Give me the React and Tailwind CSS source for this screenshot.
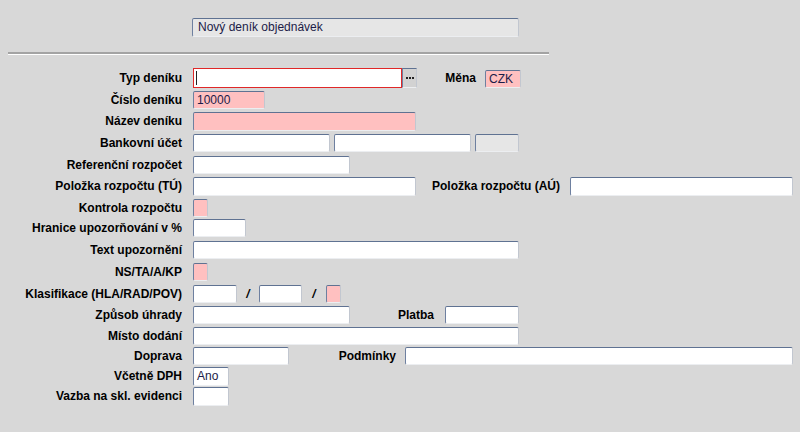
const font = { fontFamily: '"Liberation Sans", Arial, sans-serif' };

function Field({ w, h = 'h-[18px]', tone = 'white', className = '', children }) {
  const bg =
    tone === 'pink' ? 'bg-[#ffc0c0]' : tone === 'gray' ? 'bg-[#e6e6e6]' : 'bg-white';
  return (
    <div
      className={`${w} ${h} ${bg} ${className} shrink-0 rounded-[2px] border border-t-[#5f7292] border-l-[#6e80a0] border-r-[#c2c7d0] border-b-[#eceef1] px-[3px] text-[12px] leading-[16px] text-[#1c1c48] overflow-hidden whitespace-nowrap`}
    >
      {children}
    </div>
  );
}

function Label({ children, w = 'w-[182px]', lh = 'leading-[18px]' }) {
  return (
    <div className={`${w} ${lh} shrink-0 text-right text-[12px] font-bold text-black whitespace-nowrap`}>
      {children}
    </div>
  );
}

function Row({ h, children, label, lh }) {
  return (
    <div className={`flex items-start ${h}`}>
      <Label lh={lh}>{label}</Label>
      <div className="ml-[11px] flex items-start">{children}</div>
    </div>
  );
}

export default function App() {
  return (
    <div className="w-[800px] h-[432px] overflow-hidden bg-[#d8d8d8] pt-[18px]" style={font}>
      <div className="pl-[192px]">
        <Field w="w-[327px]" h="h-[19px]" tone="gray" className="pl-[5px]">
          Nový deník objednávek
        </Field>
      </div>

      <div className="ml-[8px] mt-[15px] w-[541px] border-t-2 border-t-[#a3a3a3] border-b border-b-white" />

      <div className="mt-[13px] flex flex-col">
        <Row h="h-[23px]" label="Typ deníku" lh="leading-[20px]">
          <div className="relative h-[20px] w-[209px] bg-white border border-[#e02828]">
            <div className="absolute left-[2px] top-[2px] h-[14px] w-px bg-[#222]" />
          </div>
          <div className="flex h-[20px] w-[15px] items-end justify-center gap-[1px] pb-[8px] bg-[#d2d2d2] border border-t-[#5f7292] border-l-[#6e80a0] border-r-[#c2c7d0] border-b-[#eceef1]">
            <span className="h-[2px] w-[2px] bg-[#222]" />
            <span className="h-[2px] w-[2px] bg-[#222]" />
            <span className="h-[2px] w-[2px] bg-[#222]" />
          </div>
          <Label w="w-[59px]" lh="leading-[20px]">Měna</Label>
          <Field w="w-[36px]" tone="pink" className="ml-[9px] mt-[2px]">CZK</Field>
        </Row>

        <Row h="h-[21px]" label="Číslo deníku">
          <Field w="w-[72px]" tone="pink">10000</Field>
        </Row>

        <Row h="h-[22px]" label="Název deníku" lh="leading-[19px]">
          <Field w="w-[223px]" h="h-[19px]" tone="pink" />
        </Row>

        <Row h="h-[22px]" label="Bankovní účet">
          <Field w="w-[137px]" />
          <Field w="w-[137px]" className="ml-[4px]" />
          <Field w="w-[44px]" tone="gray" className="ml-[4px]" />
        </Row>

        <Row h="h-[21px]" label="Referenční rozpočet">
          <Field w="w-[157px]" />
        </Row>

        <Row h="h-[22px]" label="Položka rozpočtu (TÚ)" lh="leading-[19px]">
          <Field w="w-[223px]" h="h-[19px]" />
          <Label w="w-[144px]" lh="leading-[19px]">Položka rozpočtu (AÚ)</Label>
          <Field w="w-[223px]" h="h-[19px]" className="ml-[10px]" />
        </Row>

        <Row h="h-[20px]" label="Kontrola rozpočtu">
          <Field w="w-[15px]" tone="pink" />
        </Row>

        <Row h="h-[22px]" label="Hranice upozorňování v %">
          <Field w="w-[53px]" />
        </Row>

        <Row h="h-[22px]" label="Text upozornění">
          <Field w="w-[326px]" />
        </Row>

        <Row h="h-[22px]" label="NS/TA/A/KP">
          <Field w="w-[15px]" tone="pink" />
        </Row>

        <Row h="h-[21px]" label="Klasifikace (HLA/RAD/POV)">
          <Field w="w-[44px]" />
          <div className="w-[22px] text-center text-[12px] font-bold leading-[18px] italic">/</div>
          <Field w="w-[43px]" />
          <div className="w-[24px] text-center text-[12px] font-bold leading-[18px] italic">/</div>
          <Field w="w-[15px]" tone="pink" />
        </Row>

        <Row h="h-[21px]" label="Způsob úhrady">
          <Field w="w-[157px]" />
          <Label w="w-[84px]">Platba</Label>
          <Field w="w-[74px]" className="ml-[11px]" />
        </Row>

        <Row h="h-[20px]" label="Místo dodání">
          <Field w="w-[326px]" />
        </Row>

        <Row h="h-[20px]" label="Doprava">
          <Field w="w-[96px]" />
          <Label w="w-[107px]">Podmínky</Label>
          <Field w="w-[388px]" className="ml-[9px]" />
        </Row>

        <Row h="h-[20px]" label="Včetně DPH" lh="leading-[19px]">
          <Field w="w-[36px]" h="h-[19px]" className="leading-[17px]">Ano</Field>
        </Row>

        <Row h="h-[20px]" label="Vazba na skl. evidenci" lh="leading-[19px]">
          <Field w="w-[36px]" h="h-[19px]" />
        </Row>
      </div>
    </div>
  );
}
